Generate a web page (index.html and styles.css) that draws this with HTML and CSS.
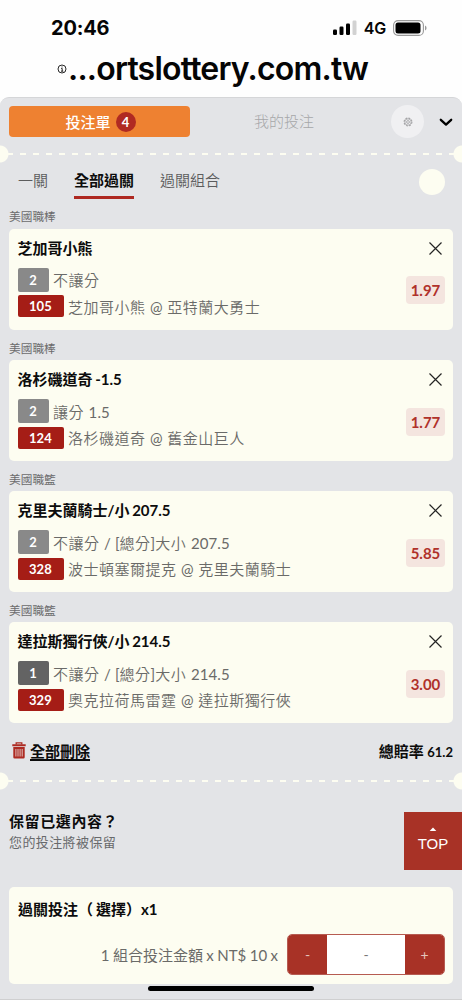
FILE: index.html
```html
<!DOCTYPE html>
<html lang="zh-Hant">
<head>
<meta charset="utf-8">
<title>投注單</title>
<link rel="stylesheet" href="styles.css">
</head>
<body>
<header class="browser">
  <div class="status">
    <span class="time">20:46</span>
    <div class="status-right">
      <svg class="signal" width="24" height="16" viewBox="0 0 24 16"><rect x="0" y="9.5" width="4" height="5.5" rx="1.2"/><rect x="6.5" y="6.5" width="4" height="8.5" rx="1.2"/><rect x="13" y="3.5" width="4" height="11.5" rx="1.2"/><rect x="19.5" y=".5" width="4" height="14.500" rx="1.2" fill="#d2d2d2"/></svg>
      <span class="net">4G</span>
      <svg class="battery" width="34" height="16" viewBox="0 0 34 16"><rect x=".6" y=".6" width="29.800" height="14.800" rx="4.500" fill="none" stroke="#999" stroke-width="1.100"/><rect x="2.500" y="2.500" width="25" height="11" rx="2.500"/><path d="M32 5.500q1.600.6 1.600 2.500T32 10.500z" fill="#999"/></svg>
    </div>
  </div>
  <div class="address">
    <svg width="10" height="10" viewBox="0 0 10 10" fill="none" stroke="#111" stroke-width=".9"><circle cx="5" cy="5" r="4"/><path d="M4.200 4.500H5.200V7.200M4 7.200H6.300M5 2.500v1"/></svg>
    <span>...ortslottery.com.tw</span>
  </div>
</header>
<main class="sheet">
  <nav class="topbar">
    <div class="slip">投注單<span class="count">4</span></div>
    <div class="mine">我的投注</div>
    <div class="gear"><svg width="10" height="10" viewBox="0 0 10 10" fill="none" stroke="#a5a5a7"><circle cx="5" cy="5" r="3.900" stroke-width="1.100" stroke-dasharray="1.900 1.160"/><circle cx="5" cy="5" r="3.200" stroke-width=".8"/><circle cx="5" cy="5" r="1.400" stroke-width=".9"/></svg></div>
    <svg class="chevron" width="14" height="9" viewBox="0 0 14 9" fill="none" stroke="#000" stroke-width="2.300" stroke-linecap="round" stroke-linejoin="round"><path d="M1.800 1.800L7 6.600l5.200-4.800"/></svg>
  </nav>
  <div class="perforation"></div>
  <nav class="tabs">
    <span class="tab">一關</span><span class="tab active">全部過關</span><span class="tab">過關組合</span><i class="dot"></i>
  </nav>

  <section class="bet">
    <h3 class="league">美國職棒</h3>
    <article class="card">
      <div class="card-head"><h2>芝加哥小熊</h2><svg class="close" width="15" height="15" viewBox="0 0 15 15"><path d="M1.500 1.500l12 12M13.500 1.500l-12 12"/></svg></div>
      <div class="card-body">
        <div class="lines"><div class="line"><b class="num">2</b><span>不讓分</span></div><div class="line"><b class="code">105</b><span>芝加哥小熊 <i class="figure">@</i> 亞特蘭大勇士</span></div></div>
        <div class="odds">1.97</div>
      </div>
    </article>
  </section>
  <section class="bet">
    <h3 class="league">美國職棒</h3>
    <article class="card">
      <div class="card-head"><h2>洛杉磯道奇 -1.5</h2><svg class="close" width="15" height="15" viewBox="0 0 15 15"><path d="M1.500 1.500l12 12M13.500 1.500l-12 12"/></svg></div>
      <div class="card-body">
        <div class="lines"><div class="line"><b class="num">2</b><span>讓分 <i class="figure">1.5</i></span></div><div class="line"><b class="code">124</b><span>洛杉磯道奇 <i class="figure">@</i> 舊金山巨人</span></div></div>
        <div class="odds">1.77</div>
      </div>
    </article>
  </section>
  <section class="bet">
    <h3 class="league">美國職籃</h3>
    <article class="card">
      <div class="card-head"><h2>克里夫蘭騎士/小 207.5</h2><svg class="close" width="15" height="15" viewBox="0 0 15 15"><path d="M1.500 1.500l12 12M13.500 1.500l-12 12"/></svg></div>
      <div class="card-body">
        <div class="lines"><div class="line"><b class="num">2</b><span>不讓分 <i class="figure">/ [</i>總分<i class="figure">]</i>大小 <i class="figure">207.5</i></span></div><div class="line"><b class="code">328</b><span>波士頓塞爾提克 <i class="figure">@</i> 克里夫蘭騎士</span></div></div>
        <div class="odds">5.85</div>
      </div>
    </article>
  </section>
  <section class="bet">
    <h3 class="league">美國職籃</h3>
    <article class="card">
      <div class="card-head"><h2>達拉斯獨行俠/小 214.5</h2><svg class="close" width="15" height="15" viewBox="0 0 15 15"><path d="M1.500 1.500l12 12M13.500 1.500l-12 12"/></svg></div>
      <div class="card-body">
        <div class="lines"><div class="line"><b class="num single">1</b><span>不讓分 <i class="figure">/ [</i>總分<i class="figure">]</i>大小 <i class="figure">214.5</i></span></div><div class="line"><b class="code">329</b><span>奧克拉荷馬雷霆 <i class="figure">@</i> 達拉斯獨行俠</span></div></div>
        <div class="odds">3.00</div>
      </div>
    </article>
  </section>

  <div class="summary">
    <svg width="14" height="17" viewBox="0 0 14 17"><path d="M4.200 2.500V.8h5.600v1.700" fill="none" stroke="#ad2a22" stroke-width="1.300"/><path d="M.3 2.300h13.400v2H.3zM1.300 5h11.400v10.300q0 1.300-1.300 1.300H2.600q-1.300 0-1.300-1.300z" fill="#ad2a22"/><path d="M3.900 7v7.500M6 7v7.500M8.100 7v7.500M10.200 7v7.500" stroke="#ece3e2" stroke-width=".8"/></svg>
    <span class="clear">全部刪除</span>
    <span class="total">總賠率 <em>61.2</em></span>
  </div>
  <div class="perforation"></div>
  <div class="keep">
    <div><h2>保留已選內容？</h2><p>您的投注將被保留</p></div>
    <div class="top"><svg width="8" height="5" viewBox="0 0 8 5"><path d="M4 .5L7.300 4H.7z" fill="#fff"/></svg><span>TOP</span></div>
  </div>
  <article class="stake">
    <h2>過關投注<span class="open">（</span>選擇）x1</h2>
    <div class="stake-row">
      <span class="stake-label">1 組合投注金額 x NT$ 10 x</span>
      <div class="stepper"><span class="step">-</span><span class="value">-</span><span class="step">+</span></div>
    </div>
  </article>
  <div class="home"></div>
</main>
</body>
</html>
```
FILE: styles.css
```css
* { box-sizing: border-box; }
body {
  margin: 0;
  width: 462px;
  height: 1000px;
  overflow: hidden;
  background: #fefefe;
  color: #0c0c0c;
  font-family: Lato, "Noto Sans CJK TC", sans-serif;
}
h2, h3, p { margin: 0; white-space: nowrap; }
svg { display: block; flex: none; }
span { white-space: nowrap; }

.browser { height: 97px; font-family: Inter, sans-serif; color: #050505; }
.status {
  height: 50px;
  padding: 6px 35px 0 51px;
  display: flex;
  align-items: center;
  justify-content: space-between;
}
.time { font-size: 20px; font-weight: 700; letter-spacing: -.2px; }
.status-right { display: flex; align-items: center; }
.net { font-size: 16px; font-weight: 600; margin: 0 7px 0 7px; letter-spacing: -.2px; }
.address {
  height: 37px;
  padding-left: 57px;
  display: flex;
  align-items: center;
  gap: 1px;
  font-size: 32px;
  font-weight: 600;
  letter-spacing: -.8px;
}

.sheet {
  height: 903px;
  background: #e3e4e7;
  border-top: 1px solid #d5d6d8;
  border-bottom: 1px solid #cfcfd0;
  border-radius: 9px 9px 0 0;
  overflow: hidden;
}
.topbar { height: 47px; padding: 8px 9px 0 9px; display: flex; align-items: flex-start; }
.slip {
  width: 181px;
  height: 31px;
  border-radius: 4px;
  background: #ee8131;
  color: #fff;
  display: flex;
  align-items: center;
  justify-content: center;
  gap: 5px;
  font-size: 15px;
  font-weight: 500;
  padding-left: 2px;
}
.count {
  width: 20px;
  height: 20px;
  border-radius: 50%;
  background: #b02a22;
  font-size: 13px;
  font-weight: 700;
  line-height: 20px;
  text-align: center;
}
.mine { width: 188px; line-height: 31px; text-align: center; font-size: 15px; font-weight: 300; color: #a6a7a9; }
.gear {
  width: 33px;
  height: 33px;
  margin: -1px 15px 0 13px;
  border-radius: 50%;
  background: #f0f0f2;
  display: flex;
  align-items: center;
  justify-content: center;
}
.chevron { margin-top: 12px; }

.perforation {
  height: 18px;
  background:
    radial-gradient(circle 9px at 0 9px, #fdfdf1 8px, transparent 9px),
    radial-gradient(circle 9px at 462px 9px, #fdfdf1 8px, transparent 9px),
    repeating-linear-gradient(90deg, #fdfdf1 0 6.500px, transparent 6.500px 13px) 7px 8px / 449px 2px no-repeat;
}
.tabs { height: 45.400px; padding: 3px 17px 0 18px; display: flex; align-items: flex-start; }
.tab { line-height: 28px; height: 33px; font-size: 15px; font-weight: 350; color: #5c5c5d; margin-right: 26px; }
.tab.active { font-weight: 700; color: #0c0c0c; border-bottom: 3px solid #ae2821; }
.dot { width: 26px; height: 26px; margin: 3px 0 0 auto; border-radius: 50%; background: #fdfdf1; }

.bet { height: 131.200px; padding: 0 9px; }
.league { height: 20.500px; line-height: 17px; font-size: 11.700px; font-weight: 400; color: #6b6b6c; }
.card { height: 101px; border-radius: 5px; background: #fdfdf1; padding: 7px 8px 0 8.500px; }
.card-head { height: 32.500px; display: flex; justify-content: space-between; align-items: flex-start; }
.card-head h2 { font-size: 15px; font-weight: 700; line-height: 25px; word-spacing: -1px; }
.close { margin: 5px 2px 0 0; fill: none; stroke: #242424; stroke-width: 1.200; }
.card-body { display: flex; justify-content: space-between; }
.lines { display: flex; flex-direction: column; gap: 3.500px; }
.line { display: flex; align-items: center; height: 23px; gap: 4.500px; font-size: 15px; font-weight: 350; letter-spacing: .5px; color: #6a6a68; }
.figure { font-style: normal; font-weight: 400; letter-spacing: .1px; }
.num, .code { border-radius: 2px; color: #fff; font-size: 13px; font-weight: 700; letter-spacing: .2px; text-align: center; }
.num { width: 31px; height: 24px; line-height: 25px; background: #898989; }
.num.single { background: #636363; }
.code { width: 46px; height: 22px; line-height: 22px; background: #a51d16; }
.odds { width: 39px; height: 28px; margin-top: 8px; border-radius: 4px; background: #f4e5df; color: #b0312a; font-size: 15px; font-weight: 700; line-height: 28px; text-align: center; }

.summary { height: 38.600px; padding: 4px 9px 0 12px; display: flex; align-items: flex-start; font-size: 15px; font-weight: 700; line-height: 28px; }
.summary svg { margin: 5px 4px 0 0; }
.clear { text-decoration: underline; text-decoration-thickness: 1.500px; text-underline-offset: 2px; }
.total { margin-left: auto; }
.total em { font-style: normal; font-size: 13px; }

.keep { height: 97px; padding: 19px 0 0 9px; display: flex; justify-content: space-between; align-items: flex-start; }
.keep h2 { font-size: 15px; line-height: 25px; font-weight: 700; letter-spacing: .6px; }
.keep p { font-size: 13px; line-height: 17px; color: #68696b; letter-spacing: .4px; }
.top { width: 58px; height: 58px; margin-top: 3px; padding-top: 15px; background: #a83226; color: #fff; display: flex; flex-direction: column; align-items: center; font: 15px/24px "Liberation Sans", sans-serif; }

.stake { height: 97px; margin: 0 9px; padding: 9px 8px 0 9px; border-radius: 5px; background: #fdfdf1; }
.stake h2 { height: 38px; font-size: 15px; line-height: 26px; font-weight: 700; }
.open { margin-right: 3px; }
.stake-row { display: flex; justify-content: flex-end; align-items: center; gap: 9px; }
.stake-label { font-size: 15px; color: #6a6a68; font-weight: 400; word-spacing: -.4px; }
.stepper { width: 158px; height: 41px; border: 1px solid #b65b51; border-radius: 5px; overflow: hidden; display: flex; background: #fff; }
.step, .value { line-height: 39px; text-align: center; font-size: 14px; }
.step { width: 39px; background: #a83226; color: #e5c5bd; }
.value { flex: 1; color: #777; }
.home { width: 166px; height: 5px; margin: 2px auto 0; border-radius: 3px; background: #000; }
```
